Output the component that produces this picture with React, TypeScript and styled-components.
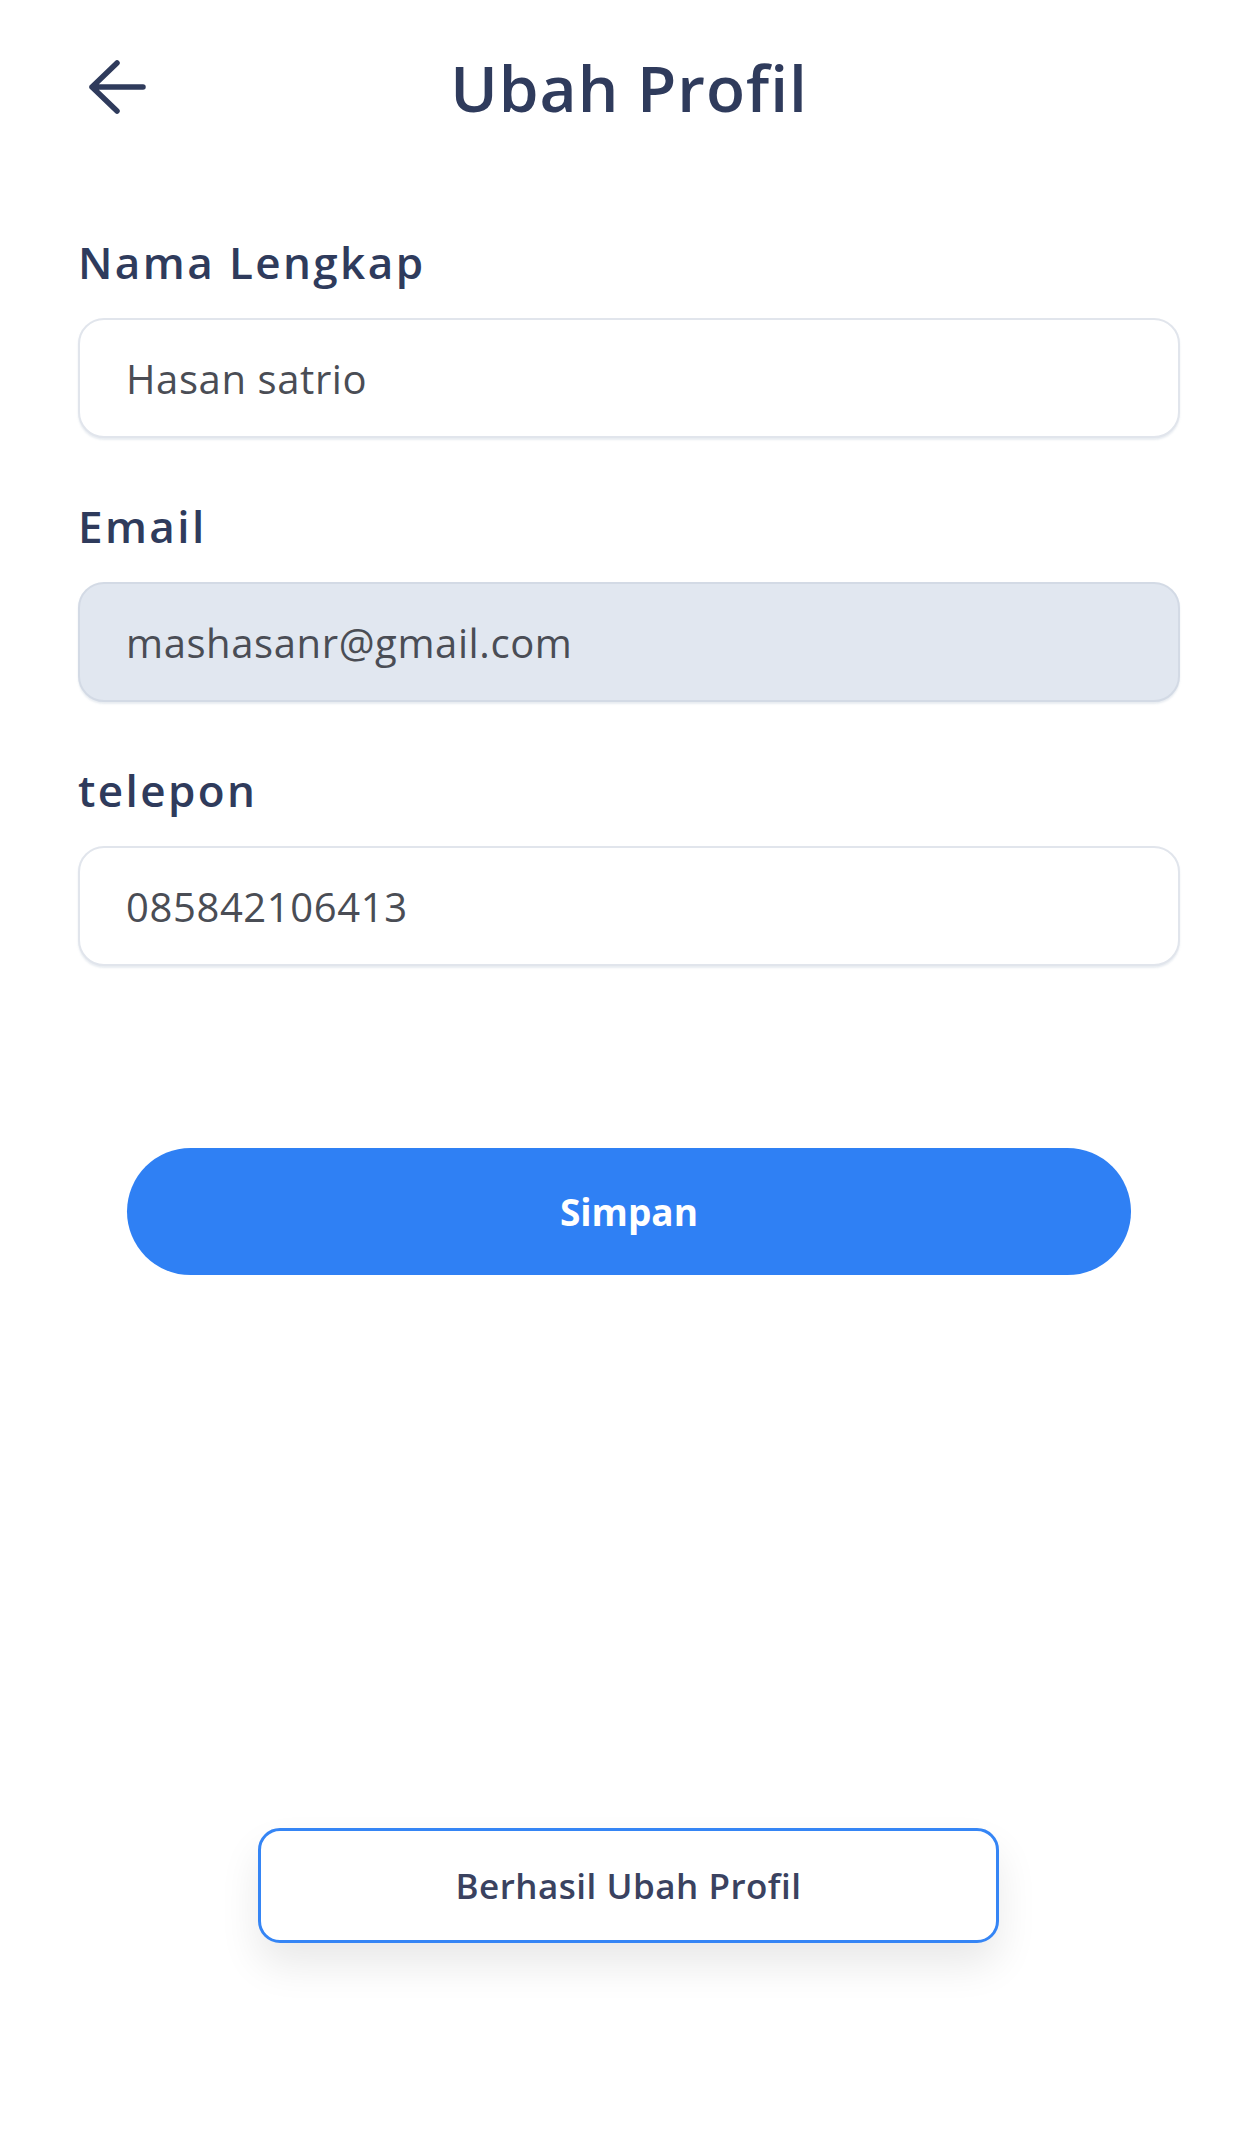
import React from "react";
import styled, { createGlobalStyle } from "styled-components";

const GlobalStyle = createGlobalStyle`
  html, body {
    margin: 0;
    padding: 0;
    background: #ffffff;
  }
  body {
    font-family: "Open Sans", "Noto Sans", sans-serif;
    color: #2f3b5c;
  }
  * {
    box-sizing: border-box;
  }
`;

interface FieldProps {
  label: string;
  value: string;
  disabled?: boolean;
}

const Field = ({ label, value, disabled }: FieldProps) => (
  <FieldWrap>
    <Label>{label}</Label>
    <Input $disabled={disabled}>{value}</Input>
  </FieldWrap>
);

const App = () => {
  return (
    <>
      <GlobalStyle />
      <Page>
        <Header>
          <BackButton aria-label="kembali">
            <svg width="60" height="60" viewBox="0 0 60 60" fill="none">
              <path
                d="M30 6 L5 30 L30 54 M5 30 H56"
                stroke="#2f3b5c"
                strokeWidth="5.5"
                strokeLinecap="round"
                strokeLinejoin="round"
              />
            </svg>
          </BackButton>
          <Title>Ubah Profil</Title>
          <span />
        </Header>

        <Form>
          <Field label="Nama Lengkap" value="Hasan satrio" />
          <Field label="Email" value="mashasanr@gmail.com" disabled />
          <Field label="telepon" value="085842106413" />
        </Form>

        <ButtonRow>
          <SaveButton>Simpan</SaveButton>
        </ButtonRow>

        <Toast>Berhasil Ubah Profil</Toast>
      </Page>
    </>
  );
};

const Page = styled.div`
  position: relative;
  width: 1256px;
  min-height: 2152px;
  padding: 0 76px 0 78px;
`;

const Header = styled.div`
  height: 174px;
  display: grid;
  grid-template-columns: 1fr auto 1fr;
  align-items: center;
`;

const BackButton = styled.button`
  width: 60px;
  height: 60px;
  padding: 0;
  margin-left: 9px;
  border: none;
  background: none;
  display: flex;
  align-items: center;
  justify-content: center;
  cursor: pointer;
`;

const Title = styled.h1`
  margin: 0;
  font-size: 64px;
  font-weight: 600;
  color: #2f3b5c;
  letter-spacing: 1px;
`;

const Form = styled.div`
  margin-top: 60px;
  display: flex;
  flex-direction: column;
  gap: 60px;
`;

const FieldWrap = styled.div`
  display: flex;
  flex-direction: column;
  gap: 28px;
`;

const Label = styled.label`
  height: 56px;
  line-height: 56px;
  font-size: 44px;
  font-weight: 600;
  letter-spacing: 2.4px;
  color: #2f3b5c;
`;

const Input = styled.div<{ $disabled?: boolean }>`
  height: 120px;
  display: flex;
  align-items: center;
  padding: 0 46px;
  border: 2px solid ${(p) => (p.$disabled ? "#d3dae5" : "#e1e5ec")};
  border-radius: 26px;
  background: ${(p) => (p.$disabled ? "#e1e7f0" : "#ffffff")};
  box-shadow: 0 2px 2px rgba(203, 213, 225, 0.45);
  font-size: 40px;
  letter-spacing: 0.6px;
  color: #4a4d55;
`;

const ButtonRow = styled.div`
  margin-top: 182px;
  padding: 0 49px;
`;

const SaveButton = styled.button`
  width: 100%;
  height: 127px;
  border: none;
  border-radius: 64px;
  background: #2f80f4;
  color: #ffffff;
  font-family: "Open Sans", "Noto Sans", sans-serif;
  font-size: 37px;
  font-weight: 700;
  cursor: pointer;
`;

const Toast = styled.div`
  position: absolute;
  top: 1828px;
  left: 258px;
  width: 741px;
  height: 115px;
  display: flex;
  align-items: center;
  justify-content: center;
  border: 3px solid #3585f5;
  border-radius: 22px;
  background: #ffffff;
  box-shadow: 0 22px 40px rgba(0, 0, 0, 0.09);
  font-size: 35px;
  font-weight: 600;
  letter-spacing: 0.5px;
  color: #3a4260;
`;

export default App;
